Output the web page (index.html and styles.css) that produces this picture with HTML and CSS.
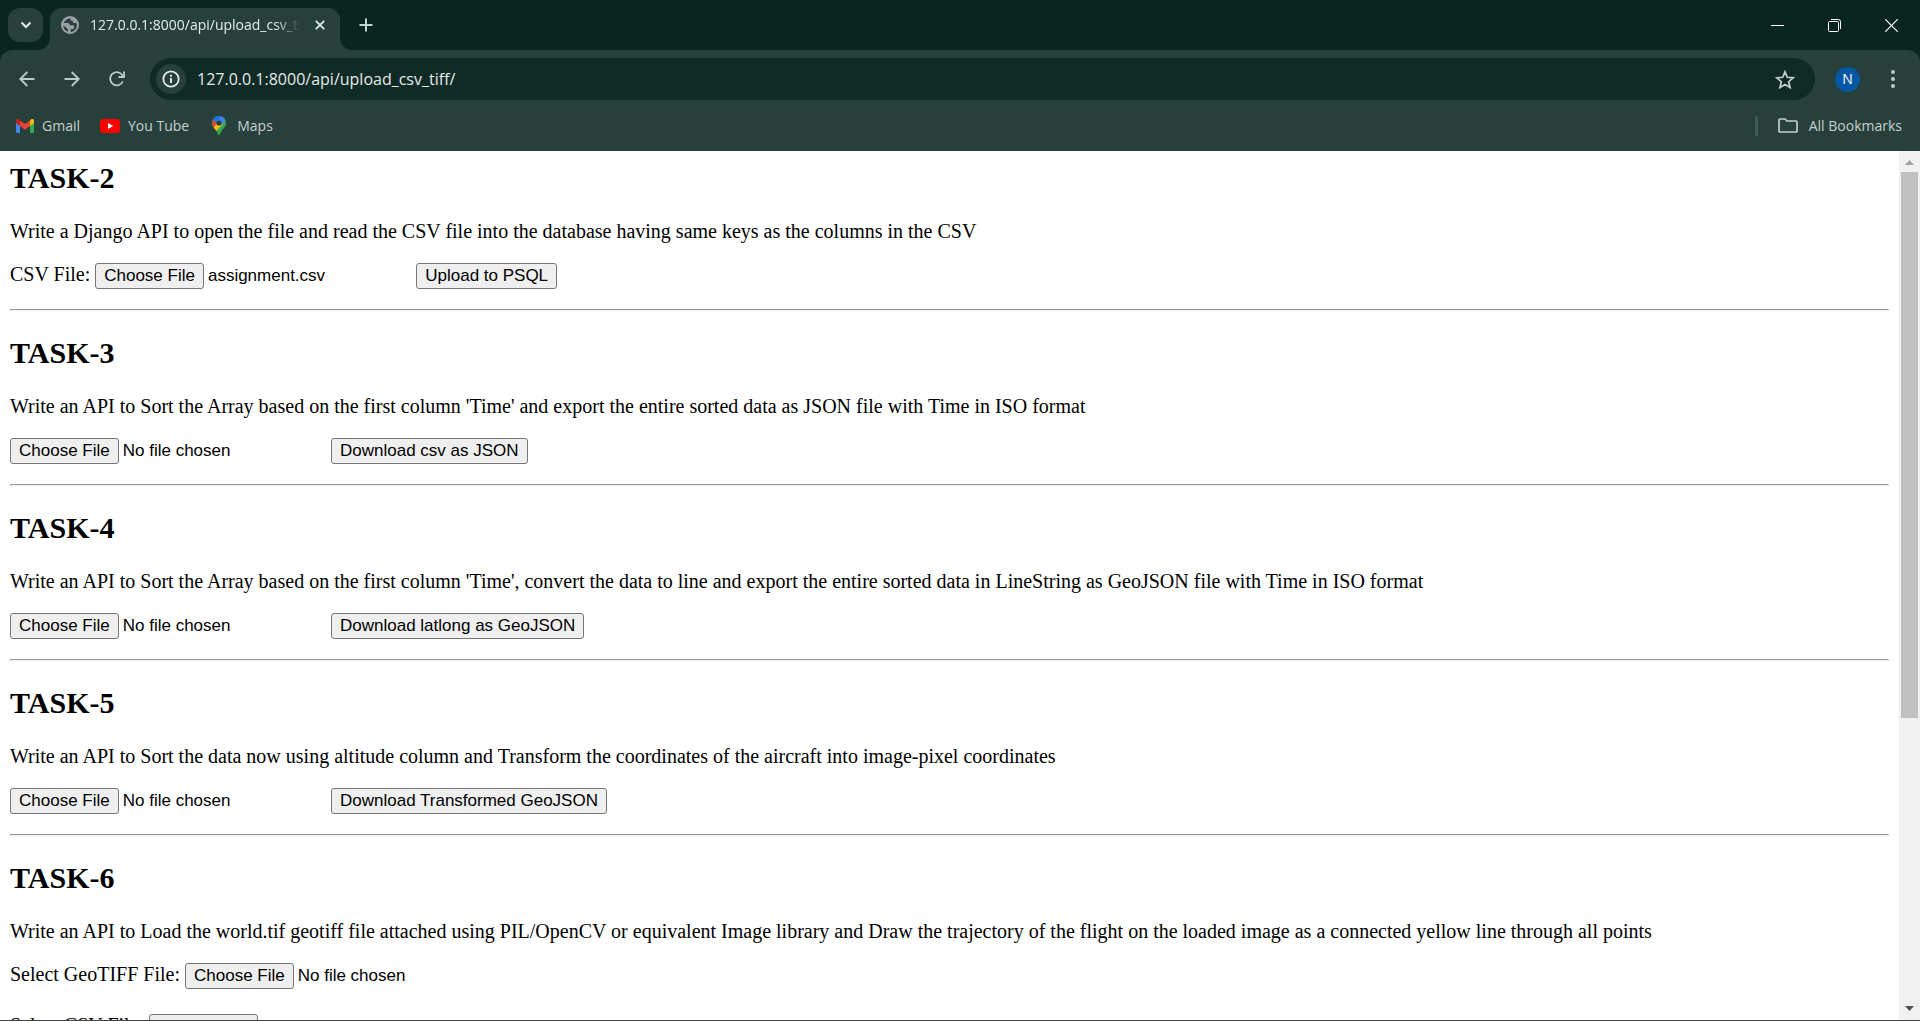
FILE: index.html
```html
<!DOCTYPE html>
<html lang="en">
<head>
<meta charset="utf-8">
<title>127.0.0.1:8000/api/upload_csv_tiff/</title>
<link rel="stylesheet" href="styles.css">
</head>
<body>
<div class="browser">
  <header class="chrome">
    <div class="tabstrip">
      <button class="tab-search" aria-label="Search tabs">
        <svg width="12" height="8" viewBox="0 0 12 8"><path d="M1.5 1.5 6 6l4.500-4.500" fill="none" stroke="#e3ebe8" stroke-width="2"/></svg>
      </button>
      <div class="tab">
        <svg width="18" height="18" viewBox="0 0 18 18"><circle cx="9" cy="9" r="9" fill="#9aa0a6"/><path d="M9.500 2.200c-3 .3-5.700 2-6.800 4.800h3.800c1.500 0 2.300.8 2.300 2.200h2.700c1 0 1.600.6 1.600 1.500v1c0 .8-.6 1.300-1.500 1.300H9.800v2.900c3.500-.3 6-3 6-6.900 0-.8-.2-1.500-.4-2.100h-2.100c-1 0-1.600-.5-1.600-1.400V4.700H9.500zM2.200 9.500c.2 3 2 5.400 4.700 6.200v-2.300L4.500 11z" fill="#28403b"/></svg>
        <span class="tab-title">127.0.0.1:8000/api/upload_csv_tiff/</span>
        <button class="icon-button" aria-label="Close tab">
          <svg width="10" height="10" viewBox="0 0 10 10"><path d="m.8.8 8.400 8.400M9.200.8.800 9.200" stroke="#e3ebe8" stroke-width="1.800"/></svg>
        </button>
      </div>
      <button class="icon-button new-tab" aria-label="New tab">
        <svg width="14" height="14" viewBox="0 0 14 14"><path d="M7 .5v13M.5 7h13" stroke="#c1d5cf" stroke-width="2"/></svg>
      </button>
      <div class="window-controls">
        <button class="window-button" aria-label="Minimize"><svg width="13" height="13" viewBox="0 0 13 13"><path d="M0 6.500h13" stroke="#fff"/></svg></button>
        <button class="window-button" aria-label="Restore"><svg width="13" height="13" viewBox="0 0 13 13" fill="none" stroke="#fff"><rect x=".5" y="2.500" width="10" height="10" rx="1"/><path d="M3 .5h7.500a2 2 0 0 1 2 2V10"/></svg></button>
        <button class="window-button" aria-label="Close"><svg width="13" height="13" viewBox="0 0 13 13"><path d="m.3.300 12.400 12.400M12.700.3.300 12.700" stroke="#fff" stroke-width="1.200"/></svg></button>
      </div>
    </div>
    <div class="panel">
      <div class="toolbar">
        <nav class="nav-buttons">
          <button class="icon-button" aria-label="Back"><svg width="16" height="16" viewBox="0 0 16 16"><path d="M15.500 8H1.500M8.300 1 1.300 8l7 7" fill="none" stroke="#b5cfc7" stroke-width="1.800"/></svg></button>
          <button class="icon-button" aria-label="Forward"><svg width="16" height="16" viewBox="0 0 16 16"><path d="M.5 8h14M7.700 1l7 7-7 7" fill="none" stroke="#b5cfc7" stroke-width="1.800"/></svg></button>
          <button class="icon-button" aria-label="Reload"><svg width="16" height="16" viewBox="0 0 16 16"><path d="M13.800 10.500A6.600 6.600 0 1 1 12.800 3.500L14.500 5.300M15 .500V6H9.500" fill="none" stroke="#b5cfc7" stroke-width="1.800"/></svg></button>
        </nav>
        <div class="omnibox">
          <button class="site-info" aria-label="View site information"><svg width="18" height="18" viewBox="0 0 18 18"><circle cx="9" cy="9" r="7.700" fill="none" stroke="#e3ebe8" stroke-width="1.800"/><path d="M9 8v5M9 4.800v1.900" stroke="#e3ebe8" stroke-width="1.900"/></svg></button>
          <input class="address" type="text" aria-label="Address" value="127.0.0.1:8000/api/upload_csv_tiff/">
          <button class="icon-button" aria-label="Bookmark this tab"><svg width="20" height="19" viewBox="0 0 20 19"><path d="m10 1.800 2.300 5.500 5.900.5-4.500 3.900 1.400 5.800-5.100-3.100-5.100 3.100 1.400-5.800-4.500-3.900 5.900-.5z" fill="none" stroke="#c4d0cd" stroke-width="1.700"/></svg></button>
        </div>
        <button class="avatar" aria-label="Profile">N</button>
        <button class="icon-button menu" aria-label="Menu"><svg width="4" height="18" viewBox="0 0 4 18" fill="#b5cfc7"><circle cx="2" cy="2" r="2"/><circle cx="2" cy="9" r="2"/><circle cx="2" cy="16" r="2"/></svg></button>
      </div>
      <div class="bookmarks">
        <a class="bookmark" href="#gmail"><svg width="18" height="14" viewBox="0 0 18 14"><path d="M0 1.500V13a1 1 0 0 0 1 1h3V5.500z" fill="#4285f4"/><path d="M14 14h3a1 1 0 0 0 1-1V1.500l-4 4z" fill="#34a853"/><path d="M14 2v5l4-3V2c0-2-2-2.500-3.200-1.500z" fill="#fbbc04"/><path d="M4 7V1.400L9 5l5-3.600V7l-5 3.800z" fill="#ea4335"/><path d="M0 2v2l4 3V1.400L3.200.500C2-.500 0 0 0 2z" fill="#c5221f"/></svg>Gmail</a>
        <a class="bookmark" href="#youtube"><svg width="20" height="14" viewBox="0 0 20 14"><rect width="20" height="14" rx="3.500" fill="#f00"/><path d="m8 4 5.200 3L8 10z" fill="#fff"/></svg>You Tube</a>
        <a class="bookmark" href="#maps"><svg class="pin" width="14" height="19" viewBox="0 0 14 19"><defs><clipPath id="pin"><path d="M7 0a7 7 0 0 1 7 7c0 4-3 5-5 9-.7 1.300-1 3-2 3s-1.300-1.700-2-3C3 12 0 11 0 7a7 7 0 0 1 7-7z"/></clipPath></defs><g clip-path="url(#pin)"><path d="M0 0h14v19H0z" fill="#34a853"/><path d="M0 0h9L6 7l-6 0z" fill="#1a73e8"/><path d="M0 3 5 7 1 12H0z" fill="#ea4335"/><path d="M1 12 10 2 11 8 3 16z" fill="#fbbc04"/><path d="m4 7 6-7h4v4L9 9z" fill="#4285f4"/></g><circle cx="7" cy="7" r="2.600" fill="#28403b"/></svg>Maps</a>
        <a class="bookmark all" href="#bookmarks"><svg width="20" height="15" viewBox="0 0 20 15"><path d="M1 2a1 1 0 0 1 1-1h5l2 2h9a1 1 0 0 1 1 1v9a1 1 0 0 1-1 1H2a1 1 0 0 1-1-1z" fill="none" stroke="#c4d0cd" stroke-width="1.700"/></svg>All Bookmarks</a>
      </div>
    </div>
  </header>

  <div class="viewport">
    <main class="page">
      <section>
        <h2>TASK-2</h2>
        <p>Write a Django API to open the file and read the CSV file into the database having same keys as the columns in the CSV</p>
        <form class="row">
          <label for="csv-file">CSV File:</label>
          <input type="file" id="csv-file">
          <button type="button" class="action">Upload to PSQL</button>
        </form>
      </section>
      <hr>
      <section>
        <h2>TASK-3</h2>
        <p>Write an API to Sort the Array based on the first column 'Time' and export the entire sorted data as JSON file with Time in ISO format</p>
        <form class="row">
          <input type="file" aria-label="CSV file to export as JSON">
          <button type="button" class="action">Download csv as JSON</button>
        </form>
      </section>
      <hr>
      <section>
        <h2>TASK-4</h2>
        <p>Write an API to Sort the Array based on the first column 'Time', convert the data to line and export the entire sorted data in LineString as GeoJSON file with Time in ISO format</p>
        <form class="row">
          <input type="file" aria-label="CSV file to export as LineString">
          <button type="button" class="action">Download latlong as GeoJSON</button>
        </form>
      </section>
      <hr>
      <section>
        <h2>TASK-5</h2>
        <p>Write an API to Sort the data now using altitude column and Transform the coordinates of the aircraft into image-pixel coordinates</p>
        <form class="row">
          <input type="file" aria-label="CSV file to transform">
          <button type="button" class="action">Download Transformed GeoJSON</button>
        </form>
      </section>
      <hr>
      <section>
        <h2>TASK-6</h2>
        <p>Write an API to Load the world.tif geotiff file attached using PIL/OpenCV or equivalent Image library and Draw the trajectory of the flight on the loaded image as a connected yellow line through all points</p>
        <form class="stack">
          <div class="row">
            <label for="tiff-file">Select GeoTIFF File:</label>
            <input type="file" id="tiff-file">
          </div>
          <div class="row">
            <label for="track-file">Select CSV File:</label>
            <input type="file" id="track-file">
          </div>
        </form>
      </section>
    </main>
    <div class="scrollbar" aria-hidden="true">
      <svg width="9" height="5" viewBox="0 0 9 5"><path d="M0 5 4.500 0 9 5z" fill="#a3a3a3"/></svg>
      <div class="track"><div class="thumb"></div></div>
      <svg width="9" height="5" viewBox="0 0 9 5"><path d="M0 0h9L4.500 5z" fill="#505050"/></svg>
    </div>
  </div>
</div>
<script src="script.js"></script>
</body>
</html>
```
FILE: styles.css
```css
* { box-sizing: border-box; }

body { margin: 0; background: #fff; color: #000; }

button { font: inherit; color: inherit; }

.browser {
  display: flex;
  flex-direction: column;
  height: 100vh;
  border-bottom: 1px solid #444;
}

/* Browser frame */
.chrome {
  flex: none;
  background: #0a2420;
  color: #c4d0cd;
  font: 14px/20px "Open Sans", "Noto Sans", sans-serif;
}

.chrome button {
  display: flex;
  align-items: center;
  justify-content: center;
  padding: 0;
  border: 0;
  background: none;
}

.chrome svg { display: block; flex: none; }

.chrome .icon-button { width: 34px; height: 34px; }

.tabstrip {
  display: flex;
  align-items: flex-start;
  height: 50px;
  padding: 8px 0 0 8px;
}

.chrome .tab-search {
  width: 35px;
  height: 34px;
  border-radius: 12px;
  background: #28403b;
}

.tab {
  position: relative;
  display: flex;
  align-items: center;
  width: 290px;
  height: 42px;
  margin-left: 7px;
  padding: 0 3px 8px 11px;
  border-radius: 12px 12px 0 0;
  background: #28403b;
  color: #e3ebe8;
}

.tab::before,
.tab::after {
  content: "";
  position: absolute;
  bottom: 0;
  width: 12px;
  height: 12px;
}

.tab::before { right: 100%; background: radial-gradient(circle at 0 0, transparent 12px, #28403b 12px); }
.tab::after { left: 100%; background: radial-gradient(circle at 100% 0, transparent 12px, #28403b 12px); }

.tab-title {
  flex: 1;
  margin-left: 11px;
  overflow: hidden;
  white-space: nowrap;
  mask-image: linear-gradient(to right, #000 185px, transparent 210px);
}

.chrome .new-tab { margin-left: 9px; }

.window-controls { display: flex; margin-left: auto; }

.chrome .window-button { width: 57px; height: 34px; }

.panel {
  border-radius: 12px 12px 0 0;
  background: #28403b;
}

.toolbar {
  display: flex;
  align-items: center;
  height: 58px;
  padding: 0 10px;
}

.nav-buttons { display: flex; gap: 11px; }

.omnibox {
  display: flex;
  flex: 1;
  align-items: center;
  height: 42px;
  margin-left: 16px;
  padding: 0 13px 0 6px;
  border-radius: 21px;
  background: #102a26;
}

.chrome .site-info {
  width: 30px;
  height: 30px;
  border-radius: 50%;
  background: #28403b;
}

.address {
  flex: 1;
  margin: 0 0 0 11px;
  padding: 0;
  border: 0;
  background: none;
  color: #e3ebe8;
  font: 16px/24px "Open Sans", "Noto Sans", sans-serif;
}

.chrome .avatar {
  width: 25px;
  height: 25px;
  margin-left: 20px;
  border-radius: 50%;
  background: #0458a3;
  color: #fff;
}

.chrome .menu { margin-left: 16px; }

.bookmarks {
  display: flex;
  align-items: center;
  gap: 20px;
  height: 43px;
  padding: 0 18px 8px 16px;
}

.bookmark {
  display: flex;
  align-items: center;
  gap: 8px;
  color: #c4d0cd;
  text-decoration: none;
}

.bookmark .pin { margin: 0 3px; }

.bookmark.all { gap: 11px; margin-left: auto; }

.bookmark.all::before {
  content: "";
  width: 3px;
  height: 20px;
  margin-right: 9px;
  border-radius: 2px;
  background: #405a54;
}

/* Page */
.viewport {
  display: flex;
  flex: 1;
  min-height: 0;
}

.page {
  flex: 1;
  min-width: 0;
  padding: 10px;
  overflow: hidden;
  font: 20px/23px "Liberation Serif", "Times New Roman", serif;
}

h2 {
  margin: 0 0 25px;
  font-size: 30px;
  line-height: 34px;
}

p { margin: 0 0 20px; }

hr { margin: 20px 0 25px; }

.row {
  display: flex;
  align-items: flex-start;
  gap: 5px;
}

.stack {
  display: flex;
  flex-direction: column;
  gap: 25px;
}

input[type="file"] {
  width: 316px;
  height: 26px;
  font: 17px/20px "Liberation Sans", Arial, sans-serif;
}

.action,
input[type="file"]::file-selector-button {
  height: 26px;
  padding: 0 8px;
  border: 1px solid #767676;
  border-radius: 3px;
  background: #efefef;
  color: #000;
  font: 17px/20px "Liberation Sans", Arial, sans-serif;
}

/* Scrollbar */
.scrollbar {
  display: flex;
  flex: none;
  flex-direction: column;
  align-items: center;
  width: 21px;
  padding: 9px 2px;
  background: #f1f1f1;
}

.track {
  flex: 1;
  align-self: stretch;
  margin: 7px 0;
}

.thumb {
  height: 66%;
  background: #c1c1c1;
}
```
FILE: script.js
```js
const picked = new DataTransfer();
picked.items.add(new File([""], "assignment.csv", { type: "text/csv" }));
document.getElementById("csv-file").files = picked.files;
```
